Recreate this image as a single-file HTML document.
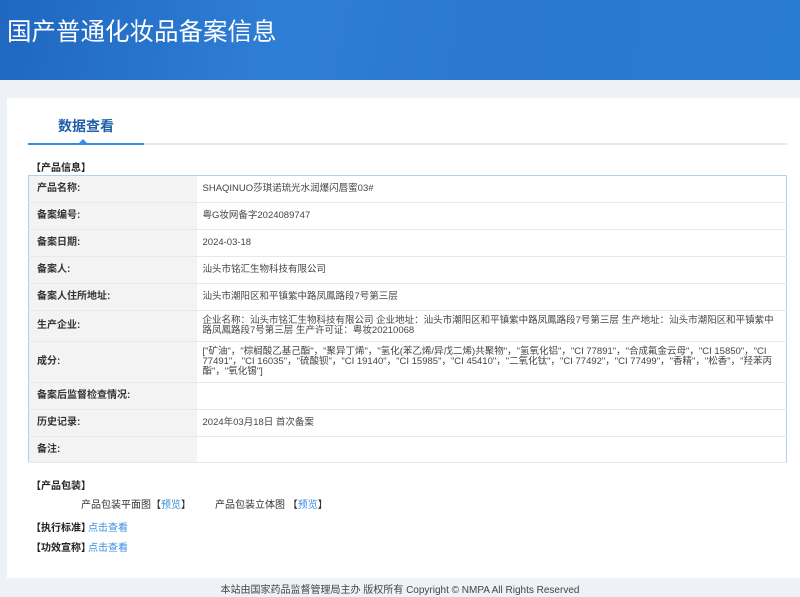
<!DOCTYPE html>
<html><head><meta charset="utf-8"><style>
*{margin:0;padding:0;box-sizing:border-box}
body{width:800px;height:597px;background:#eef1f5;font-family:"Liberation Sans","Noto Sans CJK SC",sans-serif;color:#333;position:relative;overflow:hidden;font-size:10px;line-height:1.2}
.hdr{position:absolute;left:0;top:0;width:800px;height:80px;background:linear-gradient(100deg,#1f67c0 0%,#2f7ed6 35%,#2a78d0 60%,#2a7bd2 100%)}
.hdr h1{position:absolute;left:7px;top:17px;font-size:24.5px;font-weight:normal;color:#fff;line-height:32px}
.panel{position:absolute;left:7px;top:98px;width:793px;height:480px;background:#fff}
.tab{position:absolute;left:58px;top:118px;font-size:14px;color:#1f5fa8;font-weight:bold}
.line{position:absolute;left:28px;top:143px;width:759px;height:2px;background:#e6e8ea}
.line2{position:absolute;left:28px;top:143px;width:116px;height:2px;background:#3a8ee0}
.tri{position:absolute;left:79px;top:139px;width:0;height:0;border-left:4px solid transparent;border-right:4px solid transparent;border-bottom:4px solid #3a8ee0}
.sec{position:absolute;font-weight:bold;font-size:10px;color:#222;line-height:12px}
table{position:absolute;left:28px;top:175px;width:759px;border-collapse:collapse;border:1px solid #b6cfe8}
td{border-bottom:1px solid #e8e8e8;font-size:9.5px;vertical-align:middle;line-height:10px}
td.l{width:168px;background:#f3f3f3;font-weight:bold;padding-left:8px;color:#333;font-size:10px}
td.v{padding-left:6px;padding-right:8px;color:#444}
a{color:#3a8ee0;text-decoration:none}
.foot{position:absolute;top:585px;left:0;width:800px;text-align:center;font-size:10px;color:#444}
</style></head><body>
<div class="hdr"><h1>国产普通化妆品备案信息</h1></div>
<div class="panel"></div>
<div class="tab">数据查看</div>
<div class="line"></div><div class="line2"></div><div class="tri"></div>
<div class="sec" style="left:31px;top:163px">【产品信息】</div>
<table>
<tr style="height:27px"><td class="l">产品名称:</td><td class="v">SHAQINUO莎琪诺琉光水润爆闪唇蜜03#</td></tr>
<tr style="height:27px"><td class="l">备案编号:</td><td class="v">粤G妆网备字2024089747</td></tr>
<tr style="height:27px"><td class="l">备案日期:</td><td class="v">2024-03-18</td></tr>
<tr style="height:27px"><td class="l">备案人:</td><td class="v">汕头市铭汇生物科技有限公司</td></tr>
<tr style="height:27px"><td class="l">备案人住所地址:</td><td class="v">汕头市潮阳区和平镇紫中路凤鳳路段7号第三层</td></tr>
<tr style="height:31px"><td class="l">生产企业:</td><td class="v">企业名称：汕头市铭汇生物科技有限公司 企业地址：汕头市潮阳区和平镇紫中路凤鳳路段7号第三层 生产地址：汕头市潮阳区和平镇紫中路凤鳳路段7号第三层 生产许可证：粤妆20210068</td></tr>
<tr style="height:41px"><td class="l">成分:</td><td class="v">["矿油"，"棕榈酸乙基己酯"，"聚异丁烯"，"氢化(苯乙烯/异戊二烯)共聚物"，"氢氧化铝"，"CI 77891"，"合成氟金云母"，"CI 15850"，"CI 77491"，"CI 16035"，"硫酸钡"，"CI 19140"，"CI 15985"，"CI 45410"，"二氧化钛"，"CI 77492"，"CI 77499"，"香精"，"松香"，"羟苯丙酯"，"氧化锡"]</td></tr>
<tr style="height:27px"><td class="l">备案后监督检查情况:</td><td class="v"></td></tr>
<tr style="height:27px"><td class="l">历史记录:</td><td class="v">2024年03月18日 首次备案</td></tr>
<tr style="height:26px"><td class="l">备注:</td><td class="v"></td></tr>
</table>
<div class="sec" style="left:31px;top:481px">【产品包装】</div>
<div style="position:absolute;left:81px;top:500px;font-size:10px">产品包装平面图【<a>预览</a>】</div>
<div style="position:absolute;left:215px;top:500px;font-size:10px">产品包装立体图 【<a>预览</a>】</div>
<div class="sec" style="left:31px;top:523px">【执行标准】</div><a style="position:absolute;left:88px;top:523px;font-size:10px">点击查看</a>
<div class="sec" style="left:31px;top:543px">【功效宣称】</div><a style="position:absolute;left:88px;top:543px;font-size:10px">点击查看</a>
<div class="foot">本站由国家药品监督管理局主办 版权所有 Copyright © NMPA All Rights Reserved</div>
</body></html>
